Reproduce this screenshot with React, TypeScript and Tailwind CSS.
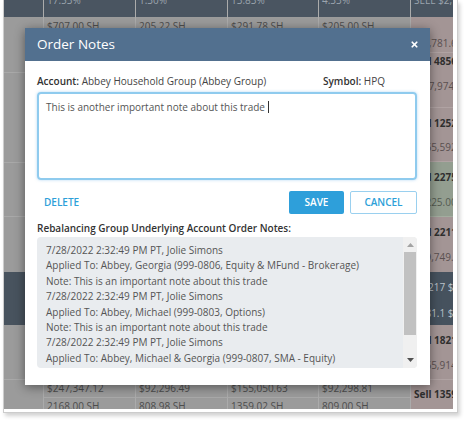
import { X } from 'lucide-react';

const noteLines = [
    '7/28/2022 2:32:49 PM PT, Jolie Simons',
    'Applied To: Abbey, Georgia (999-0806, Equity & MFund - Brokerage)',
    'Note: This is an important note about this trade',
    '7/28/2022 2:32:49 PM PT, Jolie Simons',
    'Applied To: Abbey, Michael (999-0803, Options)',
    'Note: This is an important note about this trade',
    '7/28/2022 2:32:49 PM PT, Jolie Simons',
    'Applied To: Abbey, Michael & Georgia (999-0807, SMA - Equity)',
    'Note: This is an important note about this trade',
];

const dataCols = [
    { w: 'w-[92px]', head: '17.53%', top: '$707.00 SH', value: '$247,347.12', shares: '2168.00 SH' },
    { w: 'w-[92px]', head: '1.30%', top: '205.22 SH', value: '$92,296.49', shares: '808.98 SH' },
    { w: 'w-[91px]', head: '13.83%', top: '$291.78 SH', value: '$155,050.63', shares: '1359.02 SH' },
    { w: 'w-[92px]', head: '4.33%', top: '$205.00 SH', value: '$92,298.81', shares: '809.00 SH' },
];

const HeaderCell = ({ text }: { text?: string }) => (
    <div className="h-[17px] shrink-0 overflow-hidden bg-[#4a5561] pl-[3px]">
        {text && <span className="-mt-[7px] block leading-[14px] text-[#9ba4ad]">{text}</span>}
    </div>
);

const BackgroundTable = () => (
    <div className="flex h-full text-[10px] text-[#4d4d4d]">
        {/* first column */}
        <div className="flex w-[39px] shrink-0 flex-col">
            <HeaderCell />
            <div className="h-[56px] shrink-0 border-b border-[#a9a9a9]" />
            <div className="h-[90px] shrink-0 border-b border-[#a9a9a9]" />
            <div className="h-[54px] shrink-0 border-b border-[#a9a9a9]" />
            <div className="h-[55px] shrink-0" />
            <div className="h-[53px] shrink-0 bg-[#48535e]" />
            <div className="h-[55px] shrink-0 border-b border-[#a9a9a9]" />
            <div className="flex-1" />
        </div>

        {dataCols.map((col) => (
            <div key={col.head} className={`flex ${col.w} shrink-0 flex-col border-l border-[#ababab]`}>
                <HeaderCell text={col.head} />
                <div className="h-[18px] shrink-0 border-b border-[#a9a9a9] pl-[3px] leading-[18px]">{col.top}</div>
                <div className="h-[345px] shrink-0 border-b border-[#a9a9a9]" />
                <div className="h-[18px] shrink-0 border-b border-[#a9a9a9] pl-[3px] leading-[17px]">{col.value}</div>
                <div className="h-[18px] shrink-0 pl-[3px] leading-[17px]">{col.shares}</div>
            </div>
        ))}

        {/* order column */}
        <div className="flex flex-1 flex-col border-l border-[#ababab] whitespace-nowrap">
            <HeaderCell text="SELL $2,781.68" />
            <div className="h-[36px] shrink-0 border-b border-[#b0a3a3] bg-[#a39595] pt-[19px] pl-[3px] leading-[14px] text-[#5a5050]">-$1,781.68</div>
            <div className="flex h-[55px] shrink-0 flex-col gap-[11px] border-b border-[#b0a3a3] bg-[#a39595] pt-[1px] pl-[3px] leading-[14px]">
                <span className="font-bold text-[#2f2f2f]">Sell 4856.12</span>
                <span className="text-[#5a5050]">-$27,974.25</span>
            </div>
            <div className="flex h-[54px] shrink-0 flex-col gap-[10px] border-b border-[#b0a3a3] bg-[#a39595] pt-[8px] pl-[3px] leading-[14px]">
                <span className="font-bold text-[#2f2f2f]">Sell 1252.40</span>
                <span className="text-[#5a5050]">$165,592.10</span>
            </div>
            <div className="flex h-[55px] shrink-0 flex-col gap-[11px] border-b border-[#a3ad9f] bg-[#939e90] pt-[8px] pl-[3px] leading-[14px]">
                <span className="font-bold text-[#2f2f2f]">Sell 2275.10</span>
                <span className="text-[#535a50]">$2225.00</span>
            </div>
            <div className="flex h-[55px] shrink-0 flex-col gap-[11px] bg-[#a39595] pt-[8px] pl-[3px] leading-[14px]">
                <span className="font-bold text-[#2f2f2f]">Sell 2211.36</span>
                <span className="text-[#5a5050]">$89,749.02</span>
            </div>
            <div className="flex h-[53px] shrink-0 flex-col gap-[12px] bg-[#46525e] pt-[8px] pl-[3px] leading-[14px] text-[#b9c1c9]">
                <span>$1,217 $92,176.41</span>
                <span>$781.1 $6,661.20</span>
            </div>
            <div className="flex h-[55px] shrink-0 flex-col gap-[11px] border-b border-[#b0a3a3] bg-[#a39595] pt-[8px] pl-[3px] leading-[14px]">
                <span className="font-bold text-[#2f2f2f]">Sell 1821.05</span>
                <span className="text-[#5a5050]">$165,914.30</span>
            </div>
            <div className="flex-1 bg-[#a39595] pt-[7px] pl-[3px] leading-[14px] font-bold text-[#2f2f2f]">Sell 1359.02</div>
        </div>
    </div>
);

const Scrollbar = () => (
    <div className="flex w-[14px] shrink-0 flex-col bg-[#f0f0f0]">
        <div className="flex h-[15px] items-center justify-center">
            <svg width="7" height="4" viewBox="0 0 7 4"><path d="M3.5 0 7 4H0z" fill="#a3a3a3" /></svg>
        </div>
        <div className="mx-[1px] h-[83px] bg-[#c1c1c1]" />
        <div className="flex-1" />
        <div className="flex h-[17px] items-center justify-center">
            <svg width="7" height="4" viewBox="0 0 7 4"><path d="M0 0h7L3.5 4z" fill="#505050" /></svg>
        </div>
    </div>
);

const OrderNotesModal = () => (
    <div className="absolute left-[21px] top-[28px] flex h-[357px] w-[405px] flex-col bg-white shadow-[0_2px_10px_rgba(0,0,0,0.45)]">
        <div className="flex h-[33px] shrink-0 items-center justify-between bg-[#52708f] pl-[12px] pr-[11px]">
            <span className="text-[13.5px] leading-none text-white">Order Notes</span>
            <X size={9} strokeWidth={4.5} color="#ffffff" />
        </div>

        <div className="flex flex-1 flex-col pl-[12px] pr-[13px] text-[10px] text-[#444]">
            <div className="mt-[13px] flex h-[14px] leading-[14px]">
                <div className="w-[286px]">
                    <span className="font-semibold text-[#333]">Account:</span> Abbey Household Group (Abbey Group)
                </div>
                <div>
                    <span className="font-semibold text-[#333]">Symbol:</span> HPQ
                </div>
            </div>

            <div className="mt-[4px] h-[88px] rounded-[4px] border-2 border-[#8fcbee] pl-[7px] pt-[5px] leading-[14px] text-[#555] shadow-[0_0_3px_rgba(102,175,233,0.5)]">
                This is another important note about this trade
                <span className="ml-[3px] inline-block h-[12px] w-px translate-y-[2px] bg-[#333]" />
            </div>

            <div className="mt-[11px] flex h-[23px] items-center">
                <span className="ml-[7px] font-semibold text-[#2d9fd9]">DELETE</span>
                <button className="ml-auto h-[23px] w-[55px] rounded-[2px] bg-[#2e9fda] font-semibold text-white">SAVE</button>
                <button className="ml-[6px] h-[23px] w-[67px] rounded-[2px] border-[1.5px] border-[#9ad0ef] bg-white font-semibold text-[#2d9fd9]">CANCEL</button>
            </div>

            <div className="mt-[7px] h-[14px] leading-[14px] font-semibold text-[#333]">
                Rebalancing Group Underlying Account Order Notes:
            </div>

            <div className="mt-[2px] flex h-[131px] overflow-hidden rounded-[4px] bg-[#e9ecef]">
                <div className="flex-1 overflow-hidden pl-[9px] pt-[6px] leading-[15.4px] text-[#555]">
                    {noteLines.map((line, index) => (
                        <div key={index} className="whitespace-nowrap">{line}</div>
                    ))}
                </div>
                <Scrollbar />
            </div>
        </div>
    </div>
);

export default function App() {
    return (
        <div className="h-[423px] w-[467px] bg-white font-['Open_Sans',sans-serif]">
            <div className="ml-[3px] h-[413px] w-[455px] border border-t-0 border-[#cccccc] bg-white pb-[3px] pr-[3px] shadow-[2px_3px_4px_rgba(0,0,0,0.18)]">
                <div className="relative h-[409px] w-[449px] overflow-hidden bg-[#9b9b9b]">
                    <BackgroundTable />
                    <OrderNotesModal />
                </div>
            </div>
        </div>
    );
}
